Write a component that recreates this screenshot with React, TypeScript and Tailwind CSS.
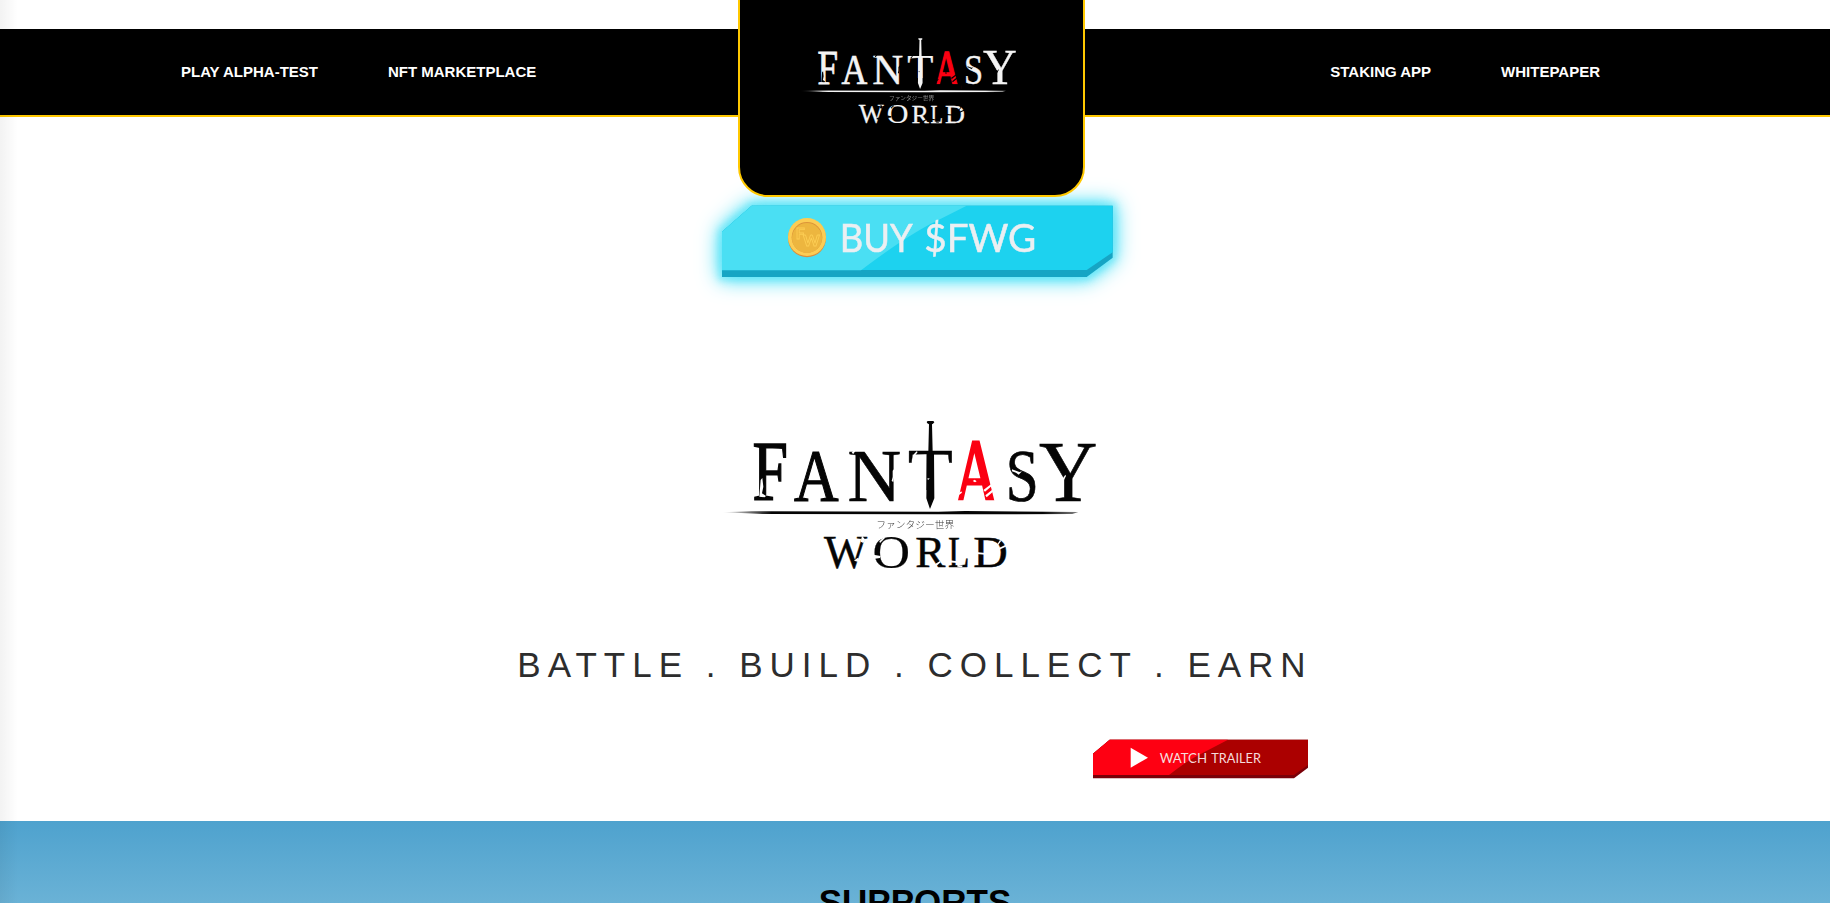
import React from "react";

type Ink = [number, number, number, number];

// Ink extents of the serif capitals, in thousandths of an em: left, right, top, bottom.
const INK: Record<string, Ink> = {
  F: [12, 546, 662, 0],
  A: [15, 706, 674, 0],
  N: [12, 707, 662, -11],
  T: [17, 593, 662, 0],
  S: [42, 491, 676, -14],
  Y: [22, 703, 662, 0],
  W: [5, 932, 662, -11],
  O: [34, 688, 676, -14],
  R: [17, 659, 662, 0],
  L: [12, 598, 662, 0],
  D: [16, 685, 662, 0],
};

function Glyph({ c, box, fill, weight = 0 }: { c: string; box: Ink; fill: string; weight?: number }) {
  const [l, r, t, b] = INK[c];
  const [x0, x1, y0, y1] = box;
  const sx = (x1 - x0) / (r - l);
  const sy = (y1 - y0) / (t - b);
  return (
    <text
      transform={`matrix(${sx * 10} 0 0 ${sy * 10} ${x0 - l * sx} ${y0 + t * sy})`}
      fontSize="100"
      fontFamily="'Liberation Serif', serif"
      fill={fill}
      stroke={fill}
      strokeWidth={weight}
    >
      {c}
    </text>
  );
}

function Logo({ ink, paper, id, className }: { ink: string; paper: string; id: string; className: string }) {
  return (
    <svg viewBox="0 0 1260 570" className={className} role="img" aria-label="Fantasy World">
      <defs>
        <linearGradient id={id} x1="0" x2="1">
          <stop offset="0" stopColor={ink} stopOpacity="0" />
          <stop offset="0.14" stopColor={ink} />
          <stop offset="0.9" stopColor={ink} />
          <stop offset="1" stopColor={ink} stopOpacity="0.5" />
        </linearGradient>
      </defs>
      <Glyph c="F" box={[160, 262, 130, 300]} fill={ink} weight={1.8} />
      <Glyph c="A" box={[285, 413, 153, 302]} fill={ink} weight={1.6} />
      <Glyph c="N" box={[445, 600, 155, 305]} fill={ink} weight={0.8} />
      <Glyph c="T" box={[627, 755, 155, 300]} fill={ink} weight={0.5} />
      <path d="M640 270h100v36H640z" fill={paper} />
      <Glyph c="A" box={[762, 896, 124, 319]} fill="#fb0012" weight={3} />
      <path d="M752 301h154v30H752z" fill={paper} />
      <Glyph c="S" box={[925, 1005, 152, 306]} fill={ink} weight={1} />
      <Glyph c="Y" box={[1022, 1187, 130, 302]} fill={ink} weight={0.8} />
      {/* sword */}
      <path d="M683 63h17l3 4-4 4-3 2 2 82h4l1 140-13 32-11-32 2-140h4l2-82-5-3-2-4z" fill={ink} />
      {/* cracks */}
      <g fill={paper}>
        <path d="M182 240l5-6 3 26-4 20 12 8-4 4-16-2z" />
        <path d="M578 212l9-10-7 44-5-3 3-12zM447 178l5-3v14h-5zM462 150l6 0-8 12-5-4z" />
        <path d="M640 164l10-10 3 2-9 12zM681 236l8-2-4 6z" />
        <path d="M850 270l32-24 3 4-30 25zM856 286l32-26 3 5-31 27zM766 286l18-12 2 4-18 13zM818 243l6-4 6 5-5 3z" />
        <path d="M936 208l22 8 8-2-10 10-8-6-12-4zM1088 236l8-12 2 4-8 16z" />
      </g>
      {/* horizon stroke */}
      <path d="M65 337l90-3 560 1 80-2 340 3-18 6-400 1-530-1-80-4z" fill={`url(#${id})`} />
      <text
        x="529"
        y="385"
        fontSize="29"
        textLength="234"
        lengthAdjust="spacingAndGlyphs"
        fontFamily="'Noto Sans CJK JP', sans-serif"
        fontWeight="300"
        fill={ink}
        opacity="0.8"
      >
        ファンタジー世界
      </text>
      <Glyph c="W" box={[373, 500, 412, 505]} fill={ink} weight={1} />
      <Glyph c="O" box={[523, 625, 408, 506]} fill={ink} weight={0.5} />
      <Glyph c="R" box={[648, 735, 412, 502]} fill={ink} weight={1} />
      <Glyph c="L" box={[745, 807, 412, 502]} fill={ink} weight={1} />
      <Glyph c="D" box={[822, 918, 412, 502]} fill={ink} weight={1} />
      <g fill={paper}>
        <path d="M486 407l10 12-6 10-8-4zM462 482l14 4 6-8-10-4zM520 464l22 4-2 6-20 3zM538 424l14-13 3 3-15 15z" />
        <path d="M702 494l18-11 2 4-14 12zM744 480l28 4v5l-28-2zM772 494l16 3-2 5-14-2zM820 455l36 4v5l-36-3zM892 446l30-14 2 5-30 14zM904 422l-10 14-3-2 9-14z" />
      </g>
    </svg>
  );
}

function BuyButton() {
  return (
    <button className="ml-[722px] mt-[88px] block h-[73px] w-[391px]">
      <svg
        viewBox="66 45 1173 219"
        className="h-[73px] w-[391px] overflow-visible drop-shadow-[0_0_10px_#1fd8f4]"
        fontFamily="Lato, sans-serif"
      >
        <path
          d="M66 125L155 47H1238V203L1160 261H66z"
          fill="#5ee6f8"
          stroke="#5ee6f8"
          strokeWidth="24"
          strokeLinejoin="round"
          opacity="0.5"
          className="blur-[10px]"
        />
        <path d="M66 125L155 47H1238V203L1160 261H66z" fill="#16a5c4" />
        <path d="M66 125L155 47H1238V187L1160 240H66z" fill="#1dd2ef" />
        <path d="M66 125L155 47H800L690 103Q610 145 483 241H66z" fill="#4adff3" />
        <ellipse cx="321" cy="144" rx="57" ry="58" fill="#d98f3c" />
        <circle cx="321" cy="141" r="57" fill="#fccd54" />
        <circle cx="321" cy="142" r="46" fill="#dc943a" />
        <circle cx="321" cy="144" r="45" fill="#edb63f" />
        <g fill="#edb63f" stroke="#fccd54" strokeWidth="2.5" fontWeight="700">
          <text x="287" y="147" fontSize="48">F</text>
          <text x="309" y="167" fontSize="44" textLength="50" lengthAdjust="spacingAndGlyphs">W</text>
        </g>
        <g fill="#ebeff2" stroke="#ebeff2" strokeWidth="1.5" fontSize="115">
          <text x="419" y="186" textLength="219" lengthAdjust="spacingAndGlyphs">BUY</text>
          <text x="673" y="186" textLength="336" lengthAdjust="spacingAndGlyphs">$FWG</text>
        </g>
      </svg>
    </button>
  );
}

function TrailerButton() {
  return (
    <button className="ml-[1093px] mt-[52px] block h-[40px] w-[215px]">
      <svg viewBox="580 326 645 120" className="h-[40px] w-[215px]" fontFamily="Lato, sans-serif">
        <path d="M580 370L630 328H1225V412L1183 444H580z" fill="#7a0008" />
        <path d="M580 370L630 328H1225V404L1183 434H580z" fill="#ab0000" />
        <path d="M580 370L630 328H985L890 378Q855 397 808 434H580z" fill="#fe0012" />
        <path d="M693 352L745 382L693 412z" fill="#fff" />
        <g fill="#f6dcdc" fontSize="42">
          <text x="780" y="398" textLength="142" lengthAdjust="spacingAndGlyphs">WATCH</text>
          <text x="935" y="398" textLength="149" lengthAdjust="spacingAndGlyphs">TRAILER</text>
        </g>
      </svg>
    </button>
  );
}

export default function App() {
  return (
    <div className="relative h-[903px] w-full overflow-hidden bg-white font-['Liberation_Sans',Arial,sans-serif]">
      <header className="relative z-10 mt-[29px] h-[88px] border-b-2 border-[#ffc800] bg-black">
        <nav className="flex h-[86px] items-center justify-between pl-[181px] pr-[230px] text-[15px] font-bold text-white">
          <div className="flex gap-[70px]">
            <a>PLAY ALPHA-TEST</a>
            <a>NFT MARKETPLACE</a>
          </div>
          <div className="flex gap-[70px]">
            <a>STAKING APP</a>
            <a>WHITEPAPER</a>
          </div>
        </nav>
        <div className="absolute -top-[31px] left-[738px] h-[199px] w-[347px] rounded-b-[30px] border-2 border-[#ffc800] bg-black">
          <Logo id="fade-nav" ink="#f4f4f4" paper="#000" className="ml-[47px] mt-[26px] h-[110px] w-[243px]" />
        </div>
      </header>
      <main>
        <BuyButton />
        <Logo id="fade-hero" ink="#050505" paper="#fff" className="ml-[700px] mt-[122px] h-[190px] w-[420px]" />
        <h1 className="mt-[53px] whitespace-nowrap text-center text-[35px] leading-[44px] tracking-[7px] text-[#2d2d2d]">
          BATTLE . BUILD . COLLECT . EARN
        </h1>
        <TrailerButton />
      </main>
      <section className="mt-[42px] h-[82px] bg-linear-to-b from-[#4ea2ce] to-[#6ab2d6] pt-[61px]">
        <h2 className="text-center text-[35px] font-bold leading-[40px] text-black">SUPPORTS</h2>
      </section>
      <div className="absolute left-0 top-0 z-20 h-full w-[18px] bg-linear-to-r from-black/5 to-transparent" />
    </div>
  );
}
